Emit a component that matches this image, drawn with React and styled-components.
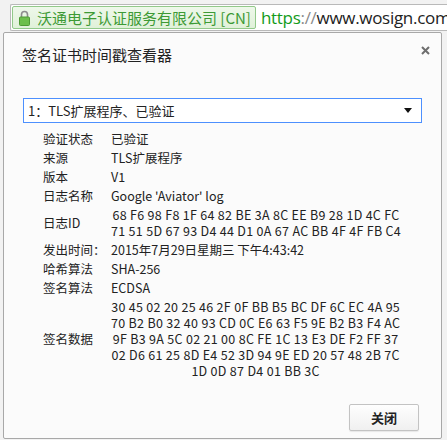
import styled, { createGlobalStyle } from "styled-components";

const GlobalStyle = createGlobalStyle`
  html, body {
    margin: 0;
    padding: 0;
    background: #f2f2f2;
    font-family: "Noto Sans CJK SC", "Noto Sans", sans-serif;
  }
`;

const Page = styled.div`
  width: 447px;
  height: 440px;
  overflow: hidden;
  display: flex;
  flex-direction: column;
  background: #f2f2f2;
`;

const Toolbar = styled.div`
  height: 32px;
  padding: 4px 0 0 10px;
  box-sizing: border-box;
  display: flex;
`;

const Omnibox = styled.div`
  flex: 1;
  height: 27px;
  box-sizing: border-box;
  background: #fff;
  border: 1px solid #b9b9b9;
  border-right: none;
  border-radius: 2px 0 0 2px;
  display: flex;
  align-items: center;
  overflow: hidden;
  white-space: nowrap;
`;

const EvBadge = styled.div`
  display: flex;
  align-items: center;
  gap: 7px;
  height: 23px;
  margin-left: 1px;
  padding: 0 4px 0 6px;
  box-sizing: border-box;
  border: 1px solid #92c98a;
  border-radius: 2px;
  background: linear-gradient(#eef8ea, #e0f1d9);
  color: #3d9a35;
  font-size: 15px;
  flex-shrink: 0;
`;

const Url = styled.div`
  margin-left: 5px;
  font-family: "Open Sans", "Liberation Sans", sans-serif;
  font-size: 17px;
  letter-spacing: -0.3px;
  color: #222;
`;

const Scheme = styled.span`
  color: #139b1a;
`;

const Sep = styled.span`
  color: #8a8a8a;
`;

const Dialog = styled.div`
  margin: 0 0 1px 3px;
  width: 439px;
  height: 407px;
  box-sizing: border-box;
  background: #fbfbfb;
  border: 1px solid #a8a8a8;
  border-radius: 2px;
  display: flex;
  flex-direction: column;
  position: relative;
`;

const Header = styled.div`
  padding: 12px 0 0 18px;
  font-size: 15px;
  line-height: 20px;
  color: #222;
`;

const CloseButton = styled.button`
  position: absolute;
  top: 10px;
  right: 9px;
  width: 14px;
  height: 14px;
  padding: 0;
  border: none;
  background: none;
  display: flex;
  align-items: center;
  justify-content: center;
`;

const SelectBox = styled.div`
  margin: 33px 19px 0 19px;
  height: 25px;
  box-sizing: border-box;
  border: 1px solid #4d90fe;
  background: #fff;
  display: flex;
  align-items: center;
  justify-content: space-between;
  padding: 0 9px 0 4px;
  font-size: 13px;
  color: #222;
`;

const Details = styled.div`
  margin: 8px 0 0 39px;
  display: grid;
  grid-template-columns: 68px auto;
  row-gap: 3px;
  justify-content: start;
  font-size: 12.5px;
  line-height: 16px;
  color: #222;
`;

const Label = styled.div`
  align-self: center;
`;

const Value = styled.div`
  align-self: center;
`;

const HexBlock = styled.div`
  display: inline-block;
  text-align: center;
  letter-spacing: 0.3px;
`;

const Footer = styled.div`
  margin-top: auto;
  padding: 0 22px 7px 0;
  display: flex;
  justify-content: flex-end;
`;

const Button = styled.button`
  width: 70px;
  height: 27px;
  border: 1px solid #c3c3c3;
  border-radius: 2px;
  background: linear-gradient(#fefefe, #f0f0f0);
  box-shadow: 0 1px 1px rgba(0, 0, 0, 0.08);
  font-family: "Noto Sans CJK SC", sans-serif;
  font-size: 13px;
  font-weight: bold;
  color: #222;
`;

const Lock = () => (
  <svg width="11" height="16" viewBox="0 0 11 16">
    <path d="M2.5 7V4.5a3 3 0 0 1 6 0V7" fill="none" stroke="#8c8c8c" strokeWidth="1.6" />
    <rect x="0.5" y="7" width="10" height="8.5" rx="1" fill="#6cbf4b" stroke="#4e9a35" />
  </svg>
);

const hexLines = (s) => {
  const bytes = s.split(" ");
  const out = [];
  for (let i = 0; i < bytes.length; i += 16) out.push(bytes.slice(i, i + 16).join(" "));
  return out;
};

const logId =
  "68 F6 98 F8 1F 64 82 BE 3A 8C EE B9 28 1D 4C FC 71 51 5D 67 93 D4 44 D1 0A 67 AC BB 4F 4F FB C4";
const sigData =
  "30 45 02 20 25 46 2F 0F BB B5 BC DF 6C EC 4A 95 70 B2 B0 32 40 93 CD 0C E6 63 F5 9E B2 B3 F4 AC 9F B3 9A 5C 02 21 00 8C FE 1C 13 E3 DE F2 FF 37 02 D6 61 25 8D E4 52 3D 94 9E ED 20 57 48 2B 7C 1D 0D 87 D4 01 BB 3C";

const rows = [
  ["验证状态", "已验证"],
  ["来源", "TLS扩展程序"],
  ["版本", "V1"],
  ["日志名称", "Google 'Aviator' log"],
  ["日志ID", hexLines(logId)],
  ["发出时间：", "2015年7月29日星期三 下午4:43:42"],
  ["哈希算法", "SHA-256"],
  ["签名算法", "ECDSA"],
  ["签名数据", hexLines(sigData)],
];

export default function App() {
  return (
    <Page>
      <GlobalStyle />
      <Toolbar>
        <Omnibox>
          <EvBadge>
            <Lock />
            <span>沃通电子认证服务有限公司 [CN]</span>
          </EvBadge>
          <Url>
            <Scheme>https</Scheme>
            <Sep>://</Sep>www.wosign.com
          </Url>
        </Omnibox>
      </Toolbar>
      <Dialog>
        <Header>签名证书时间戳查看器</Header>
        <CloseButton aria-label="close">
          <svg width="9" height="9" viewBox="0 0 9 9">
            <path d="M1 1L8 8M8 1L1 8" stroke="#6e6e6e" strokeWidth="2" />
          </svg>
        </CloseButton>
        <SelectBox>
          <span>1：TLS扩展程序、已验证</span>
          <svg width="8" height="5" viewBox="0 0 8 5">
            <path d="M0 0H8L4 5Z" fill="#111" />
          </svg>
        </SelectBox>
        <Details>
          {rows.map(([label, value]) => (
            <>
              <Label key={label + "l"}>{label}</Label>
              <Value key={label + "v"}>
                {Array.isArray(value) ? (
                  <HexBlock>
                    {value.map((line) => (
                      <div key={line}>{line}</div>
                    ))}
                  </HexBlock>
                ) : (
                  value
                )}
              </Value>
            </>
          ))}
        </Details>
        <Footer>
          <Button>关闭</Button>
        </Footer>
      </Dialog>
    </Page>
  );
}
